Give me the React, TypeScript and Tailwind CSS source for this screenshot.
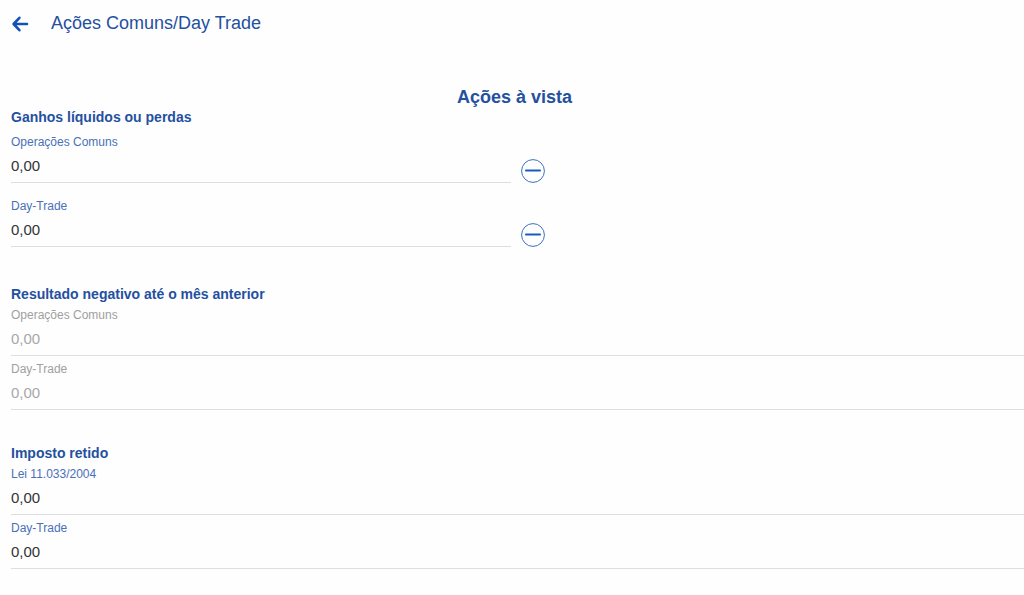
import { useId, useState } from "react";

interface FieldProps {
  label: string;
  initialValue?: string;
  disabled?: boolean;
}

function Field({ label, initialValue = "0,00", disabled }: FieldProps) {
  const id = useId();
  const [value, setValue] = useState(initialValue);

  return (
    <div className="min-w-0">
      <label
        htmlFor={id}
        className={`block text-xs ${disabled ? "text-[#a0a0a0]" : "text-[#4a70b8]"}`}
      >
        {label}
      </label>
      <input
        id={id}
        type="text"
        inputMode="decimal"
        value={value}
        disabled={disabled}
        onChange={(e) => setValue(e.target.value)}
        className="block h-[33px] w-full border-b border-[#dedede] bg-transparent pb-[2px] text-[15px] text-[#333333] focus:border-[#1351b4] focus:outline-none disabled:text-[#a8a8a8]"
      />
    </div>
  );
}

function SignedField({ label }: FieldProps) {
  return (
    <div className="grid grid-cols-2 items-end gap-[10px] pr-1">
      <Field label={label} />
      <button type="button" aria-label={`Inverter sinal: ${label}`} className="w-6">
        <svg viewBox="0 0 24 24" className="block size-6" fill="none" stroke="#3a6fc8">
          <circle cx="12" cy="12" r="11.4" strokeWidth="1" />
          <path d="M5 11.5h14" strokeWidth="2" strokeLinecap="round" stroke="#1a58bd" />
        </svg>
      </button>
    </div>
  );
}

function SectionTitle({ children }: { children: React.ReactNode }) {
  return (
    <h3 className="text-sm leading-5 font-bold text-[#2450a0]">{children}</h3>
  );
}

export default function App() {
  return (
    <div className="min-h-screen bg-[#fefefe] pb-6 font-['Liberation_Sans',Arial,sans-serif]">
      <header className="flex h-[46px] items-center gap-[21px] pl-[10px]">
        <button type="button" aria-label="Voltar">
          <svg
            viewBox="0 0 20 20"
            className="block size-5"
            fill="none"
            stroke="#1351b4"
            strokeWidth="2.6"
            strokeLinecap="round"
            strokeLinejoin="round"
          >
            <path d="M9.4 4.8L3.6 11l5.8 6.2M3.8 11h13.2" />
          </svg>
        </button>
        <h1 className="text-lg text-[#2450a0]">Ações Comuns/Day Trade</h1>
      </header>

      <main className="pt-[41px] pl-[5px]">
        <h2 className="text-center text-lg leading-5 font-bold text-[#2450a0]">
          Ações à vista
        </h2>

        <form className="pl-[6px]" onSubmit={(e) => e.preventDefault()}>
          <section>
            <SectionTitle>Ganhos líquidos ou perdas</SectionTitle>
            <div className="mt-[7px] space-y-[15px]">
              <SignedField label="Operações Comuns" />
              <SignedField label="Day-Trade" />
            </div>
          </section>

          <section className="mt-[37px]">
            <SectionTitle>Resultado negativo até o mês anterior</SectionTitle>
            <div className="mt-[3px] space-y-[5px]">
              <Field label="Operações Comuns" disabled />
              <Field label="Day-Trade" disabled />
            </div>
          </section>

          <section className="mt-[33px]">
            <SectionTitle>Imposto retido</SectionTitle>
            <div className="mt-[3px] space-y-[5px]">
              <Field label="Lei 11.033/2004" />
              <Field label="Day-Trade" />
            </div>
          </section>
        </form>
      </main>
    </div>
  );
}
